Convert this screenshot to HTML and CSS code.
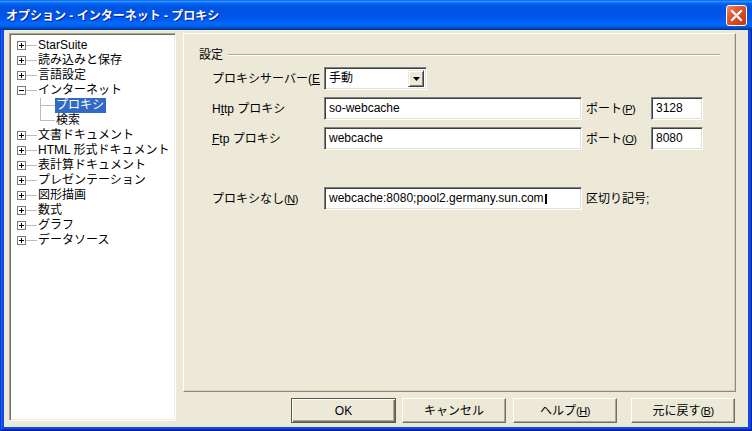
FILE: index.html
```html
<!DOCTYPE html>
<html lang="ja">
<head>
<meta charset="utf-8">
<title>オプション - インターネット - プロキシ</title>
<link rel="stylesheet" href="styles.css">
</head>
<body>
<div class="window">
  <div class="titlebar">
    <span class="title">オプション - インターネット - プロキシ</span>
    <span class="close">
      <svg width="19" height="19" viewBox="0 0 19 19"><path d="M5 5 L14 14 M14 5 L5 14" stroke="#fff" stroke-width="2.2" stroke-linecap="square"/></svg>
    </span>
  </div>
  <div class="client">
    <div class="tree">
      <div class="row"><span class="tw plus"></span><span class="conn"></span><span class="lbl">StarSuite</span></div>
      <div class="row"><span class="tw plus"></span><span class="conn"></span><span class="lbl">読み込みと保存</span></div>
      <div class="row"><span class="tw plus"></span><span class="conn"></span><span class="lbl">言語設定</span></div>
      <div class="row"><span class="tw"></span><span class="conn"></span><span class="lbl">インターネット</span></div>
      <div class="row child"><span class="branch"></span><span class="lbl sel">プロキシ</span></div>
      <div class="row child last"><span class="branch"></span><span class="lbl">検索</span></div>
      <div class="row"><span class="tw plus"></span><span class="conn"></span><span class="lbl">文書ドキュメント</span></div>
      <div class="row"><span class="tw plus"></span><span class="conn"></span><span class="lbl">HTML 形式ドキュメント</span></div>
      <div class="row"><span class="tw plus"></span><span class="conn"></span><span class="lbl">表計算ドキュメント</span></div>
      <div class="row"><span class="tw plus"></span><span class="conn"></span><span class="lbl">プレゼンテーション</span></div>
      <div class="row"><span class="tw plus"></span><span class="conn"></span><span class="lbl">図形描画</span></div>
      <div class="row"><span class="tw plus"></span><span class="conn"></span><span class="lbl">数式</span></div>
      <div class="row"><span class="tw plus"></span><span class="conn"></span><span class="lbl">グラフ</span></div>
      <div class="row"><span class="tw plus"></span><span class="conn"></span><span class="lbl">データソース</span></div>
    </div>
    <div class="main">
      <div class="page">
        <div class="group-head"><span class="group-title">設定</span><span class="rule"></span></div>
        <div class="form">
          <div class="frow">
            <span class="flabel clip">プロキシサーバー(<u>E</u>)</span>
            <div class="combo"><span class="combo-val">手動</span><span class="combo-btn"><svg width="7" height="4" viewBox="0 0 7 4"><path d="M0 0 H7 L3.5 4 Z" fill="#000"/></svg></span></div>
          </div>
          <div class="frow">
            <span class="flabel">H<u>t</u>tp プロキシ</span>
            <div class="field wide">so-webcache</div>
            <span class="plabel">ポート<span class="mn">(<u>P</u>)</span></span>
            <div class="field port">3128</div>
          </div>
          <div class="frow">
            <span class="flabel"><u>F</u>tp プロキシ</span>
            <div class="field wide">webcache</div>
            <span class="plabel">ポート<span class="mn">(<u>O</u>)</span></span>
            <div class="field port">8080</div>
          </div>
          <div class="frow gapped">
            <span class="flabel">プロキシなし<span class="mn">(<u>N</u>)</span></span>
            <div class="field wide">webcache:8080;pool2.germany.sun.com<span class="caret"></span></div>
            <span class="plabel">区切り記号;</span>
          </div>
        </div>
      </div>
      <div class="buttons">
        <span class="btn default">OK</span>
        <span class="btn b-cancel">キャンセル</span>
        <span class="btn b-help">ヘルプ<span class="mn">(<u>H</u>)</span></span>
        <span class="btn b-reset">元に戻す<span class="mn">(<u>B</u>)</span></span>
      </div>
    </div>
  </div>
</div>
</body>
</html>
```

FILE: styles.css
```css
* { box-sizing: border-box; }
html, body { margin: 0; padding: 0; }
body {
  width: 752px;
  height: 431px;
  overflow: hidden;
  font-family: "Liberation Sans", "Noto Sans CJK JP", sans-serif;
  font-size: 12px;
  color: #000;
}
.window {
  width: 752px;
  height: 431px;
  display: flex;
  flex-direction: column;
  background: #0B4BDF;
  box-shadow: inset 1px 0 0 #0831D9, inset -1px 0 0 #001EA0, inset 0 -1px 0 #001C90, inset 2px 0 0 #166AEE, inset 0 -2px 0 #0032C0;
}
.titlebar {
  height: 30px;
  flex: none;
  display: flex;
  align-items: center;
  justify-content: space-between;
  padding: 0 5px 0 6px;
  background: linear-gradient(to bottom, #0058EE 0%, #3593FF 4%, #288EFF 6%, #127DFF 8%, #036FFC 10%, #0262EE 14%, #0057E5 20%, #0054E3 24%, #0055EB 56%, #005BF5 66%, #026AFE 76%, #0062EF 86%, #0052D6 92%, #0040AB 96%, #003092 100%);
}
.title {
  color: #fff;
  font-weight: bold;
  font-size: 12px;
  line-height: 16px;
  white-space: nowrap;
  text-shadow: 1px 1px 0 #0A1E8C;
  margin-top: 1px;
}
.close {
  width: 21px;
  height: 21px;
  border: 1px solid #fff;
  border-radius: 3px;
  background: linear-gradient(135deg, #F0896A 0%, #E05A33 35%, #D2461C 70%, #C0370F 100%);
  display: flex;
  align-items: center;
  justify-content: center;
  margin-top: 1px;
}
.client {
  flex: 1;
  margin: 0 4px 4px 4px;
  background: #ECE9D8;
  display: flex;
  align-items: flex-start;
  padding: 3px 12px 0 5px;
}
/* tree */
.tree {
  width: 167px;
  height: 388px;
  margin-right: 7px;
  background: #fff;
  border-top: 1px solid #ACA899;
  border-left: 1px solid #ACA899;
  border-right: 1px solid #fff;
  border-bottom: 1px solid #fff;
  box-shadow: inset 1px 1px 0 #716F64, inset -1px -1px 0 #F1EFE2;
  padding: 4px 0 0 1px;
}
.row {
  height: 15px;
  line-height: 15px;
  display: flex;
  align-items: center;
  white-space: nowrap;
}
.tw {
  width: 9px;
  height: 9px;
  margin-left: 6px;
  border: 1px solid #7B7B7B;
  background: #fff;
  position: relative;
  flex: none;
}
.tw::before {
  content: "";
  position: absolute;
  left: 1px;
  top: 3px;
  width: 5px;
  height: 1px;
  background: #000;
}
.tw.plus::after {
  content: "";
  position: absolute;
  left: 3px;
  top: 1px;
  width: 1px;
  height: 5px;
  background: #000;
}
.conn {
  width: 11px;
  height: 1px;
  background: #BDBDB5;
  flex: none;
}
.lbl {
  padding: 0 1px;
  height: 15px;
}
.lbl.sel {
  background: #316AC5;
  color: #fff;
  padding: 0 2px 0 1px;
}
.branch {
  position: relative;
  width: 15px;
  height: 15px;
  margin-left: 29px;
  flex: none;
}
.branch::before {
  content: "";
  position: absolute;
  left: 0;
  top: 0;
  width: 1px;
  height: 15px;
  background: #BDBDB5;
}
.last .branch::before { height: 8px; }
.branch::after {
  content: "";
  position: absolute;
  left: 0;
  top: 7px;
  width: 15px;
  height: 1px;
  background: #BDBDB5;
}
/* main */
.main {
  width: 553px;
  display: flex;
  flex-direction: column;
}
.page {
  height: 359px;
  border-top: 1px solid #fff;
  border-left: 1px solid #fff;
  border-right: 1px solid #8C8A7F;
  border-bottom: 1px solid #8C8A7F;
  box-shadow: inset -1px -1px 0 #D6D2C2;
  padding: 13px 0 0 15px;
}
.group-head {
  height: 16px;
  display: flex;
  align-items: center;
  line-height: 16px;
}
.group-title { white-space: nowrap; }
.rule {
  flex: 1;
  height: 2px;
  margin: 0 15px 0 5px;
  border-top: 1px solid #ACA899;
  border-bottom: 1px solid #fff;
}
.form {
  margin: 4px 0 0 13px;
  display: flex;
  flex-direction: column;
  gap: 7px;
}
.frow {
  height: 23px;
  display: flex;
  align-items: center;
  line-height: 16px;
  white-space: nowrap;
}
.frow.gapped { margin-top: 30px; }
.flabel {
  width: 112px;
  overflow: hidden;
  white-space: nowrap;
  flex: none;
}
.flabel.clip {
  width: 108px;
  margin-right: 4px;
}
.plabel {
  width: 69px;
  padding-left: 4px;
  flex: none;
}
.mn { font-size: 11px; letter-spacing: -0.5px; }
.field, .combo {
  height: 23px;
  background: #fff;
  border-top: 1px solid #808080;
  border-left: 1px solid #808080;
  border-right: 1px solid #fff;
  border-bottom: 1px solid #fff;
  box-shadow: inset 1px 1px 0 #404040, inset -1px -1px 0 #E4E1D4;
  padding: 0 0 0 4px;
  line-height: 20px;
  flex: none;
  white-space: nowrap;
  overflow: hidden;
}
.field.wide { width: 258px; }
.field.port { width: 52px; }
.caret {
  display: inline-block;
  width: 2px;
  height: 10px;
  background: #000;
  margin-left: 1px;
  vertical-align: -2px;
}
.combo {
  width: 103px;
  display: flex;
  align-items: flex-start;
  justify-content: space-between;
  padding: 0 2px 0 4px;
}
.combo-val { line-height: 20px; }
.combo-btn {
  width: 16px;
  height: 17px;
  margin-top: 2px;
  background: #ECE9D8;
  border-top: 1px solid #ECE9D8;
  border-left: 1px solid #ECE9D8;
  border-right: 1px solid #404040;
  border-bottom: 1px solid #404040;
  box-shadow: inset 1px 1px 0 #fff, inset -1px -1px 0 #808080;
  display: flex;
  align-items: center;
  justify-content: center;
}
/* buttons */
.buttons {
  margin-top: 6px;
  height: 25px;
  display: flex;
  justify-content: flex-end;
  padding-right: 1px;
}
.btn {
  width: 104px;
  height: 25px;
  background: #ECE9D8;
  border-top: 1px solid #fff;
  border-left: 1px solid #fff;
  border-right: 1px solid #716F64;
  border-bottom: 1px solid #716F64;
  box-shadow: inset -1px -1px 0 #ACA899;
  display: flex;
  align-items: center;
  justify-content: center;
  line-height: 16px;
  white-space: nowrap;
}
.btn.default {
  width: 105px;
  border: 1px solid #5A5850;
  box-shadow: inset 1px 1px 0 #fff, inset -1px -1px 0 #716F64, inset -2px -2px 0 #ACA899;
}
.b-cancel { margin-left: 6px; }
.b-help { margin-left: 7px; }
.b-reset { margin-left: 14px; }
```
